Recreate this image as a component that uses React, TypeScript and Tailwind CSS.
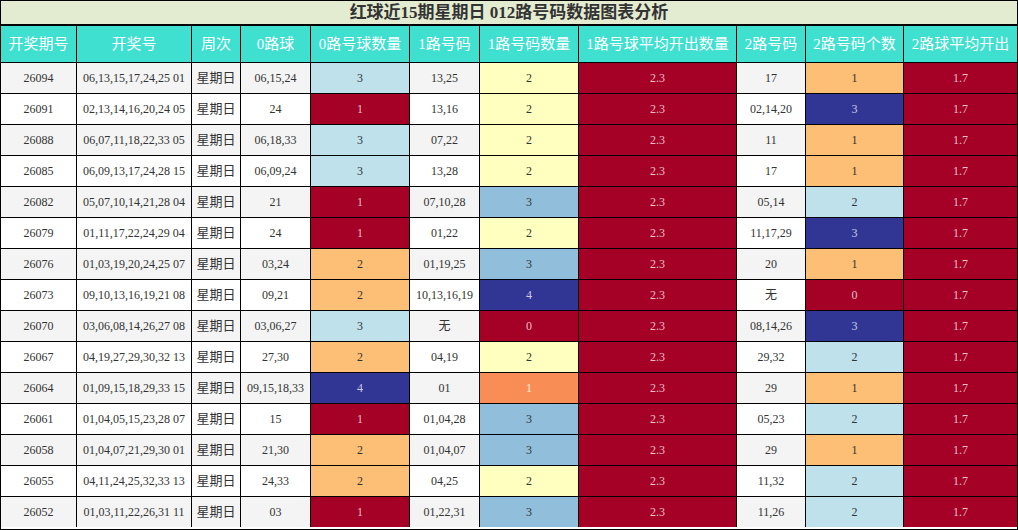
import React from "react";

type Row = [string, string, string, number, string, number, string, number];

const rows: Row[] = [
  ["26094", "06,13,15,17,24,25 01", "06,15,24", 3, "13,25", 2, "17", 1],
  ["26091", "02,13,14,16,20,24 05", "24", 1, "13,16", 2, "02,14,20", 3],
  ["26088", "06,07,11,18,22,33 05", "06,18,33", 3, "07,22", 2, "11", 1],
  ["26085", "06,09,13,17,24,28 15", "06,09,24", 3, "13,28", 2, "17", 1],
  ["26082", "05,07,10,14,21,28 04", "21", 1, "07,10,28", 3, "05,14", 2],
  ["26079", "01,11,17,22,24,29 04", "24", 1, "01,22", 2, "11,17,29", 3],
  ["26076", "01,03,19,20,24,25 07", "03,24", 2, "01,19,25", 3, "20", 1],
  ["26073", "09,10,13,16,19,21 08", "09,21", 2, "10,13,16,19", 4, "无", 0],
  ["26070", "03,06,08,14,26,27 08", "03,06,27", 3, "无", 0, "08,14,26", 3],
  ["26067", "04,19,27,29,30,32 13", "27,30", 2, "04,19", 2, "29,32", 2],
  ["26064", "01,09,15,18,29,33 15", "09,15,18,33", 4, "01", 1, "29", 1],
  ["26061", "01,04,05,15,23,28 07", "15", 1, "01,04,28", 3, "05,23", 2],
  ["26058", "01,04,07,21,29,30 01", "21,30", 2, "01,04,07", 3, "29", 1],
  ["26055", "04,11,24,25,32,33 13", "24,33", 2, "04,25", 2, "11,32", 2],
  ["26052", "01,03,11,22,26,31 11", "03", 1, "01,22,31", 3, "11,26", 2],
];

const headers = [
  "开奖期号",
  "开奖号",
  "周次",
  "0路球",
  "0路号球数量",
  "1路号码",
  "1路号码数量",
  "1路号球平均开出数量",
  "2路号码",
  "2路号码个数",
  "2路球平均开出",
];

const DARK = "text-white/75";

function zeroCls(n: number) {
  switch (n) {
    case 1:
      return `bg-[#a50026] ${DARK}`;
    case 2:
      return "bg-[#fdbf76] text-[#333]";
    case 3:
      return "bg-[#bfe1ec] text-[#333]";
    default:
      return `bg-[#313695] ${DARK}`;
  }
}

function oneCls(n: number) {
  switch (n) {
    case 0:
      return `bg-[#a50026] ${DARK}`;
    case 1:
      return "bg-[#f88e55] text-white/80";
    case 2:
      return "bg-[#ffffbf] text-[#333]";
    case 3:
      return "bg-[#91bfdb] text-[#333]";
    default:
      return `bg-[#313695] ${DARK}`;
  }
}

function twoCls(n: number) {
  switch (n) {
    case 0:
      return `bg-[#a50026] ${DARK}`;
    case 1:
      return "bg-[#fdbf76] text-[#333]";
    case 2:
      return "bg-[#bfe1ec] text-[#333]";
    default:
      return `bg-[#313695] ${DARK}`;
  }
}

const font = {
  fontFamily: '"Liberation Serif", "Noto Sans CJK SC", serif',
};

export default function App() {
  return (
    <div
      className="w-[1018px] h-[530px] border border-black bg-white text-[12px] text-[#333]"
      style={font}
    >
      <div className="h-[25px] border-b-2 border-black bg-[#e3ebd1] flex items-center justify-center text-[17px] font-bold text-[#333] leading-none">
        红球近15期星期日 012路号码数据图表分析
      </div>
      <div className="grid grid-cols-[75px_114px_48px_69px_98px_69px_98px_157px_68px_97px_113px] grid-rows-[36px] auto-rows-[30px] gap-px bg-black">
        {headers.map((h) => (
          <div
            key={h}
            className="bg-[#40e0d0] text-white text-[15px] flex items-center justify-center whitespace-nowrap"
          >
            {h}
          </div>
        ))}
        {rows.map((r, i) => {
          const base = i % 2 === 0 ? "bg-[#f4f4f4]" : "bg-white";
          const cell = "flex items-center justify-center whitespace-nowrap";
          return (
            <React.Fragment key={r[0]}>
              <div className={`${cell} ${base}`}>{r[0]}</div>
              <div className={`${cell} ${base}`}>{r[1]}</div>
              <div className={`${cell} ${base} text-[13px]`}>星期日</div>
              <div className={`${cell} ${base}`}>{r[2]}</div>
              <div className={`${cell} ${zeroCls(r[3])}`}>{r[3]}</div>
              <div className={`${cell} ${base}`}>{r[4]}</div>
              <div className={`${cell} ${oneCls(r[5])}`}>{r[5]}</div>
              <div className={`${cell} bg-[#a50026] ${DARK}`}>2.3</div>
              <div className={`${cell} ${base}`}>{r[6]}</div>
              <div className={`${cell} ${twoCls(r[7])}`}>{r[7]}</div>
              <div className={`${cell} bg-[#a50026] ${DARK}`}>1.7</div>
            </React.Fragment>
          );
        })}
      </div>
    </div>
  );
}
